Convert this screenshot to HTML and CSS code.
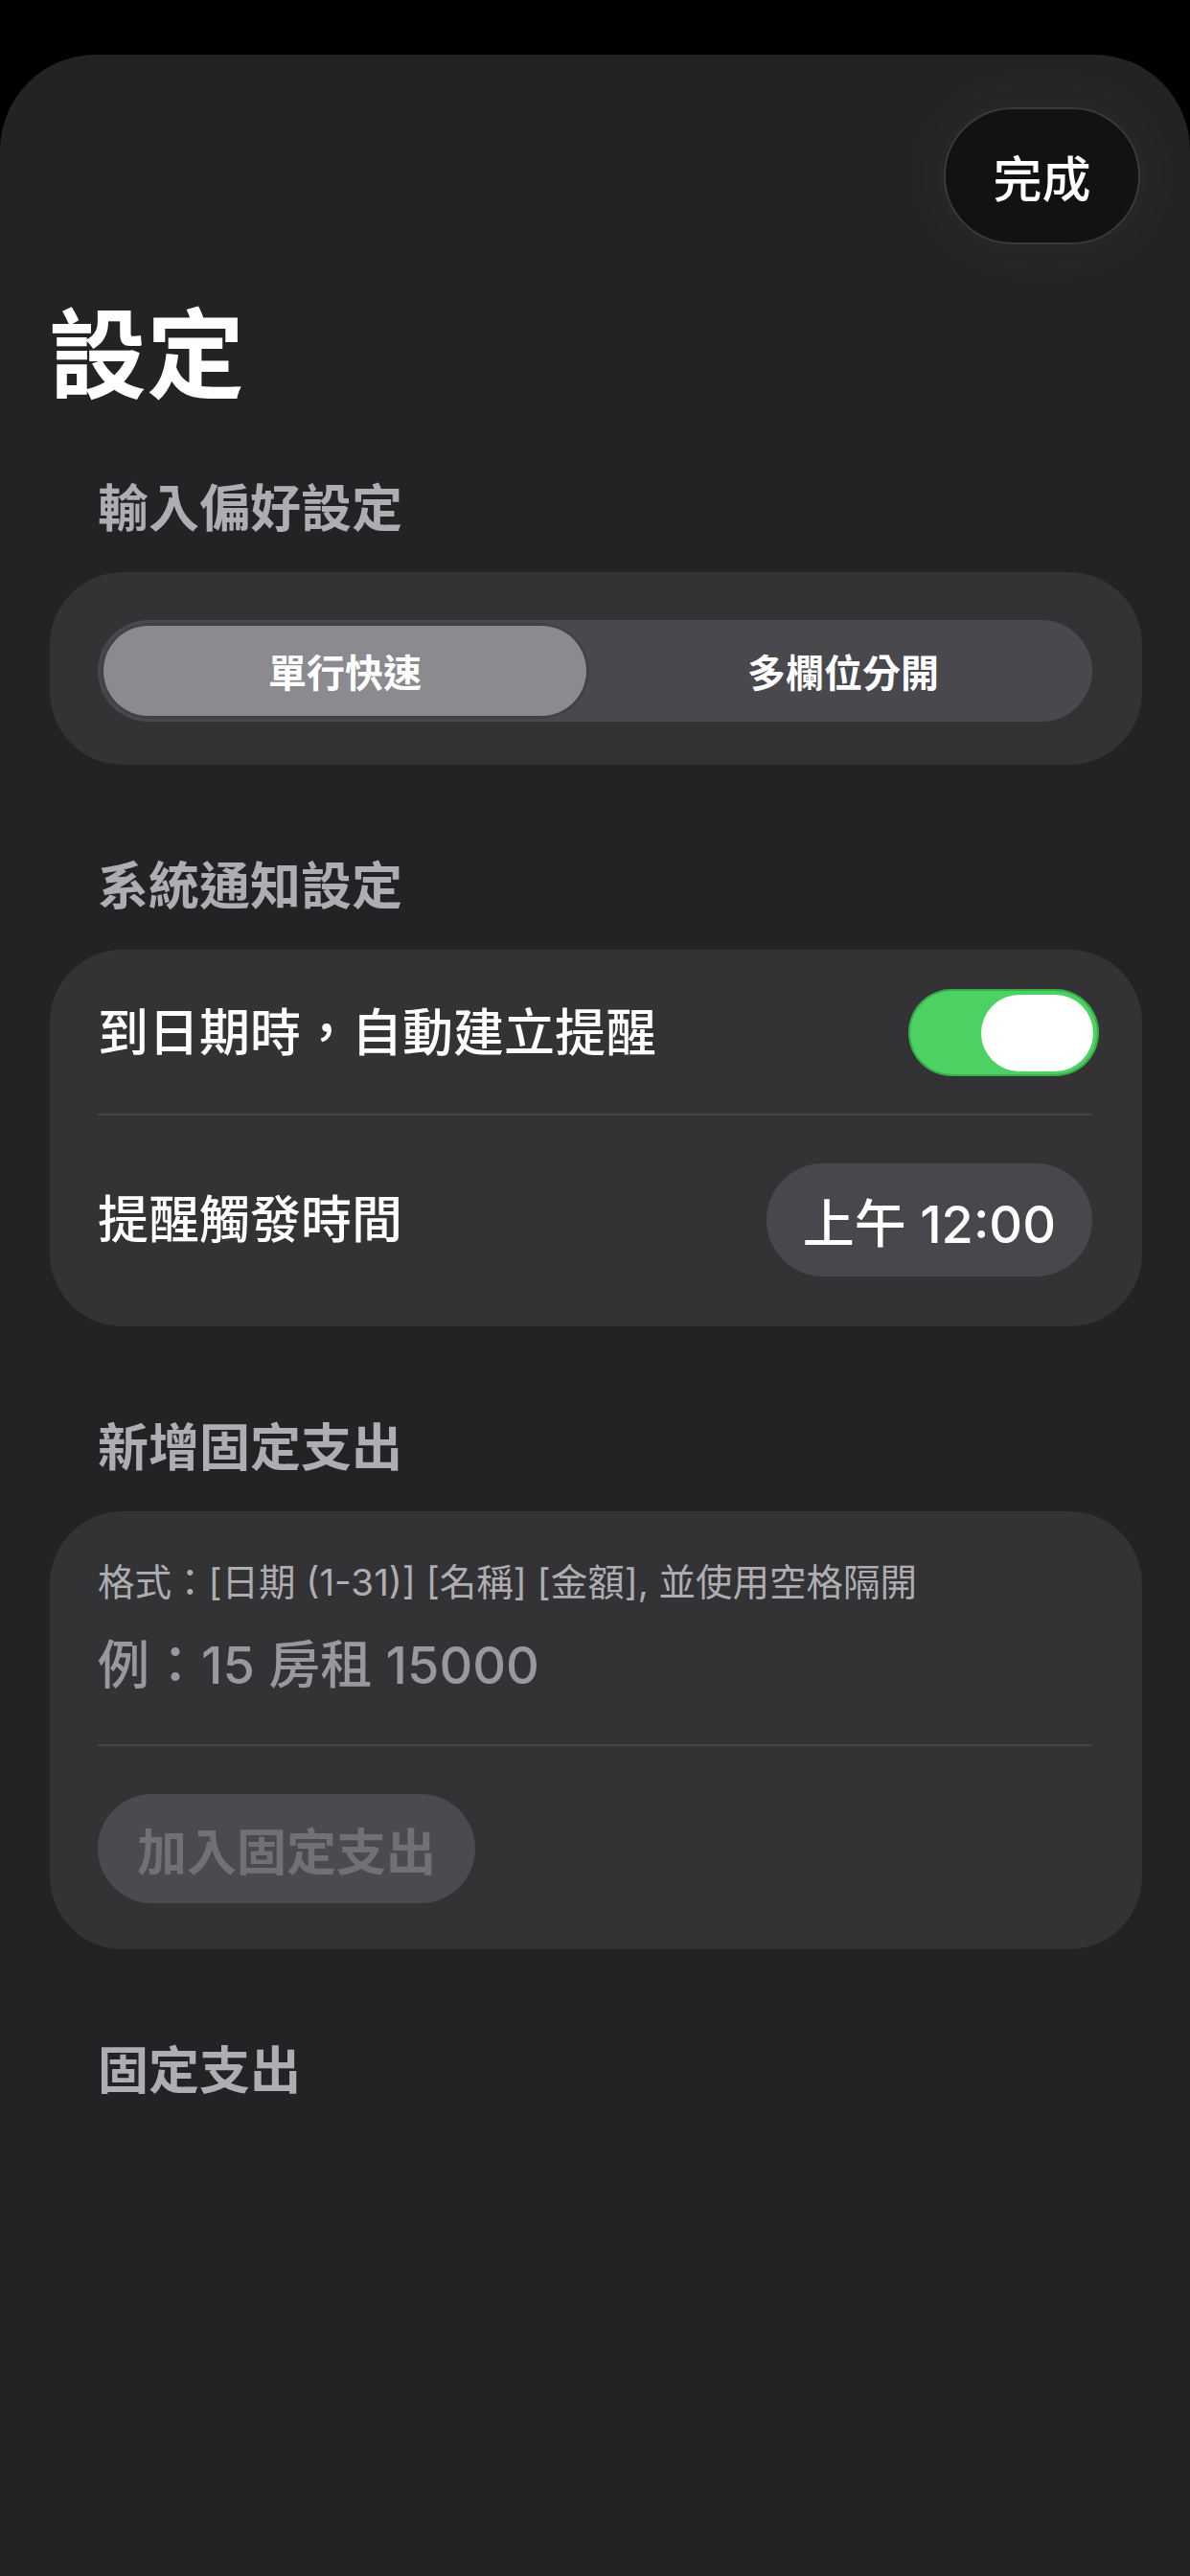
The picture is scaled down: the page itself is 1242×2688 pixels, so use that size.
FILE: index.html
```
<!DOCTYPE html>
<html lang="zh-Hant">

<head>
  <meta charset="UTF-8">
  <meta name="viewport" content="width=device-width, initial-scale=1.0">
  <title>設定</title>
  <link rel="stylesheet" href="styles.css">
</head>

<body>
  <div class="sheet">
    <div class="topbar">
      <button type="button" class="done">完成</button>
    </div>

    <h1 class="title">設定</h1>

    <h2 class="section-title first">輸入偏好設定</h2>
    <div class="card card-segment">
      <div class="segmented">
        <button type="button" class="seg-item active">單行快速</button>
        <button type="button" class="seg-item">多欄位分開</button>
      </div>
    </div>

    <h2 class="section-title">系統通知設定</h2>
    <div class="card card-list">
      <div class="row row-toggle">
        <span class="row-label">到日期時，自動建立提醒</span>
        <span class="switch on"><span class="knob"></span></span>
      </div>
      <div class="divider"></div>
      <div class="row row-time">
        <span class="row-label">提醒觸發時間</span>
        <button type="button" class="time-pill">上午 12:00</button>
      </div>
    </div>

    <h2 class="section-title">新增固定支出</h2>
    <div class="card card-form">
      <p class="hint">格式：[日期 (1-31)] [名稱] [金額], 並使用空格隔開</p>
      <input type="text" class="entry" placeholder="例：15 房租 15000">
      <div class="divider"></div>
      <button type="button" class="add-btn" disabled>加入固定支出</button>
    </div>

    <h2 class="section-title">固定支出</h2>
  </div>
</body>

</html>
```

FILE: styles.css
```
* {
  box-sizing: border-box;
}
body {
  margin: 0;
  padding: 57px 0 0;
  background-color: #000;
  font-family: Inter, 'Noto Sans CJK TC', sans-serif;
  color: #fff;
}
.sheet {
  min-height: 2631px;
  padding: 0 50px 0 52px;
  background-color: #232326;
  border-radius: 100px 100px 0 0;
}
.topbar {
  display: flex;
  justify-content: flex-end;
  padding: 55px 2px 0 0;
}
.done {
  width: 205px;
  height: 143px;
  border: 2px solid #3a3a3c;
  border-radius: 72px;
  background-color: #121212;
  color: #fff;
  font-family: inherit;
  font-size: 51px;
  font-weight: 500;
  box-shadow: 0 0 50px 30px rgba(255, 255, 255, 0.02);
}
.title {
  margin: 55px 0 0 -1px;
  font-size: 102px;
  line-height: 122px;
  font-weight: 700;
}
.section-title {
  margin: 96px 0 35px;
  padding-left: 50px;
  font-size: 53px;
  line-height: 62px;
  font-weight: 700;
  color: #aeaeb2;
}
.section-title.first {
  margin-top: 68px;
}
.card {
  background-color: #333336;
  border-radius: 76px;
}
.card-segment {
  padding: 50px 52px 45px 50px;
}
.segmented {
  display: grid;
  grid-template-columns: 504px 1fr;
  height: 106px;
  padding: 6px;
  background-color: #48484d;
  border-radius: 53px;
}
.seg-item {
  padding: 0 0 0 14px;
  border: none;
  border-radius: 47px;
  background: transparent;
  color: #fff;
  font-family: inherit;
  font-size: 40px;
  font-weight: 600;
}
.seg-item.active {
  padding: 0;
  background-color: #8a8a8f;
  box-shadow: 0 0 0 3px rgba(0, 0, 0, 0.08);
}
.card-list {
  padding: 0 52px 0 50px;
}
.row {
  display: flex;
  align-items: center;
  justify-content: space-between;
}
.row-toggle {
  padding: 41px 0 39px;
}
.row-time {
  padding: 50px 0 52px;
}
.row-label {
  font-size: 53px;
  line-height: 62px;
  font-weight: 500;
}
.switch {
  display: flex;
  justify-content: flex-end;
  align-items: center;
  width: 199px;
  height: 91px;
  margin-right: -7px;
  padding: 0 6px;
  border-radius: 46px;
  background-color: #4cd263;
  box-shadow: inset 0 0 0 2px rgba(0, 60, 0, 0.25);
}
.knob {
  width: 117px;
  height: 80px;
  border-radius: 40px;
  background-color: #fff;
}
.divider {
  height: 2px;
  background-color: #444447;
}
.time-pill {
  height: 118px;
  padding: 0 38px;
  border: none;
  border-radius: 59px;
  background-color: #48484c;
  color: #fff;
  font-family: inherit;
  font-size: 54px;
  font-weight: 500;
}
.card-form {
  padding: 51px 52px 48px 50px;
}
.hint {
  margin: 0;
  font-size: 38.5px;
  line-height: 46px;
  color: #aeaeb2;
}
.entry {
  display: block;
  width: 100%;
  height: 62px;
  margin-top: 32px;
  padding: 0;
  border: none;
  background: transparent;
  color: #fff;
  font-family: inherit;
  font-size: 54px;
  font-weight: 500;
  outline: none;
}
.entry::placeholder {
  color: #98989e;
}
.card-form .divider {
  margin-top: 52px;
}
.add-btn {
  display: block;
  height: 114px;
  margin-top: 50px;
  padding: 0 41px;
  border: none;
  border-radius: 57px;
  background-color: #4a4a4f;
  color: #707075;
  font-family: inherit;
  font-size: 52px;
  font-weight: 700;
}
```
